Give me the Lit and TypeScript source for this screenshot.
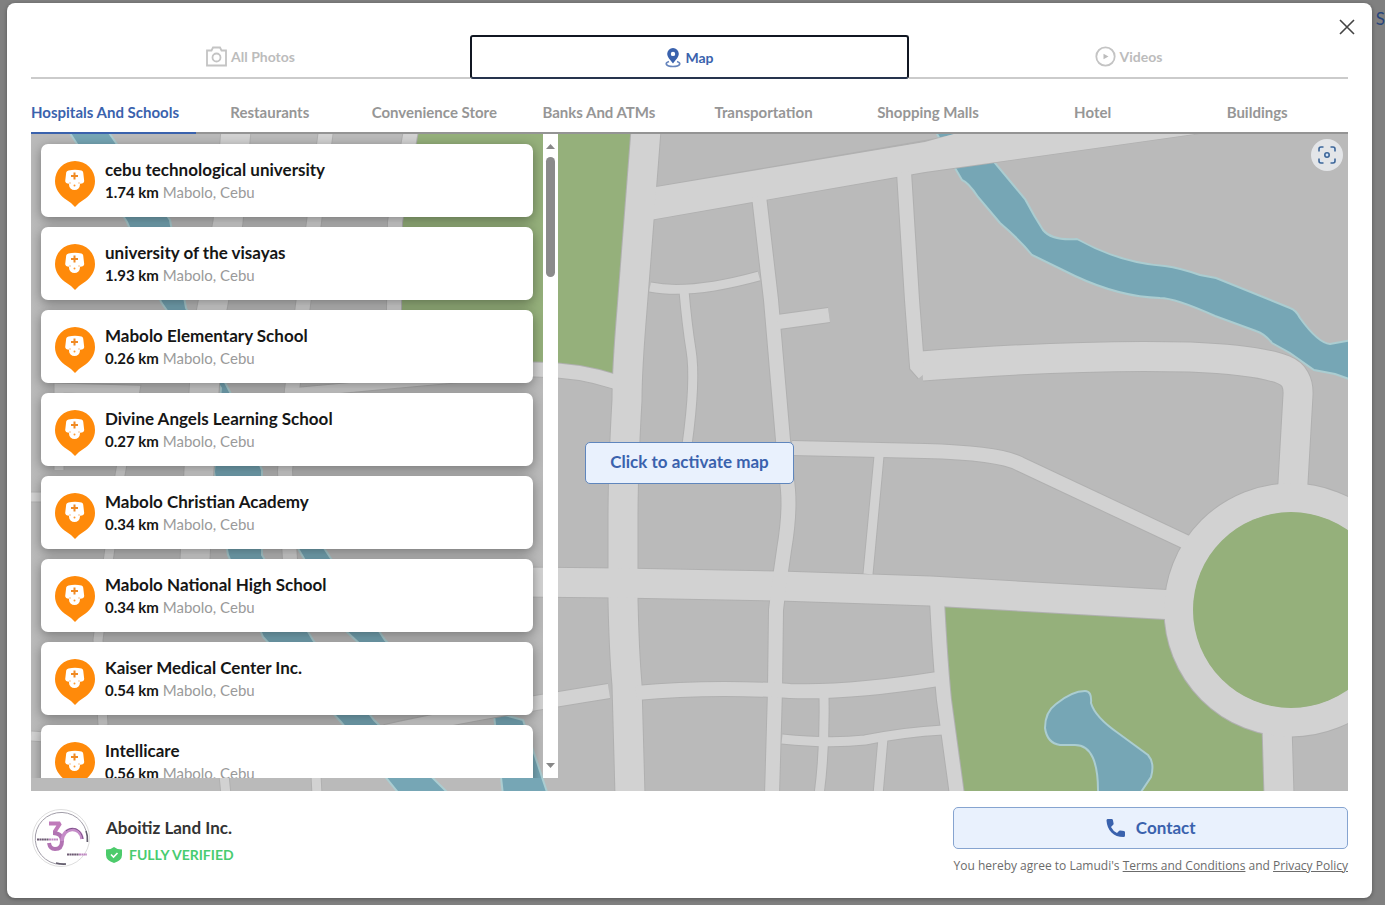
import { LitElement, html, css, svg } from "lit";
import { customElement, property, state } from "lit/decorators.js";
import { classMap } from "lit/directives/class-map.js";

const FONT = css`"Lato", "Open Sans", sans-serif`;

/* Static artwork shown until the live map is activated. */
@customElement("map-artwork")
class MapArtwork extends LitElement {
  static styles = css`
    :host { display: block; width: 100%; height: 100%; }
    svg { display: block; width: 100%; height: 100%; }
    .land { fill: #bababa; }
    .park { fill: #95b07b; }
    .water { fill: #76a6b5; stroke: #abcdd1; stroke-width: 2; }
    .road { fill: #d2d2d2; }
    .lines { fill: none; stroke: #d2d2d2; }
    .edges { fill: none; stroke: #b0b0b0; }
    .w9 { stroke-width: 9; }
    .w14 { stroke-width: 14; }
    .w29 { stroke-width: 29; }
    .edges .w9 { stroke-width: 11; }
    .edges .w14 { stroke-width: 16; }
    .edges .w29 { stroke-width: 31; }
  `;

  private roads() {
    return svg`
      <path class="w29" d="M646 130 L632 310 Q627 370 627 400 Q623 470 623 520 L623 600 Q624 650 627 685 L630 795"/>
      <path class="w29" d="M520 582 L620 583 L780 586 L930 591 L1175 605"/>
      <path class="w29" d="M922 366 Q1080 354 1190 357 Q1260 360 1284 370 Q1299 376 1298 395 L1292 500"/>
      <path class="w29" d="M1277 725 L1279 795"/>
      <path class="w14" d="M904 172 L912 300 L917 366 L924 374"/>
      <path class="w14" d="M759 196 L771 300 L783 440 L788 490 Q790 515 784 550 L779 585 L776 610 L775 690 L772 795"/>
      <path class="w14" d="M792 448 L925 451 Q1000 453 1020 464 L1188 543"/>
      <path class="w14" d="M636 693 Q710 686 790 691 Q850 693 938 679"/>
      <path class="w14" d="M937 600 Q940 660 944 700 L957 795"/>
      <path class="w14" d="M778 322 L829 315"/>
      <path class="w14" d="M516 370 Q570 367 616 382"/>
      <path class="w14" d="M385 732 Q470 713 609 691"/>
      <path class="w9" d="M650 287 Q690 295 759 276"/>
      <path class="w9" d="M684 291 Q687 325 691 350 Q696 380 687 445"/>
      <path class="w9" d="M879 456 L868 574"/>
      <path class="w9" d="M782 739 Q830 744 865 740 Q905 732 943 730"/>
      <path class="w9" d="M824 697 Q825 750 819 795"/>
      <path class="w9" d="M883 738 L878 795"/>
      <path class="w29" d="M236 130 L228 222 L208 330 L199 470 L195 560"/>
      <path class="w14" d="M326 130 L314 222 L303 305 L292 390 L285 471 L290 560"/>
      <path class="w14" d="M411 130 L395 222 L394 310"/>
      <path class="w9" d="M59 470 L59 388 L135 390 L120 475 L109 555 L98 640 L103 725"/>
      <path class="w9" d="M290 393 L532 371"/>
      <path class="w9" d="M31 497 L50 497 M31 736 L60 738"/>
      <path class="w9" d="M224 775 L226 795 M316 775 L317 795"/>
    `;
  }

  render() {
    return html`
      <svg viewBox="31 134 1317 657" preserveAspectRatio="xMidYMid slice" aria-hidden="true">
        <rect class="land" x="31" y="134" width="1317" height="657" />
        <path class="park" d="M418 130 L634 130 L614 374 Q575 363 540 363 L401 363 L402 220 Z" />
        <path class="park" d="M944 606 L1180 618 L1270 725 L1266 795 L960 795 Q948 700 944 606Z" />
        <path class="water" d="M68 130 L107 130 L170 220 L186 308 L230 392 L262 470 L262 555 L313 640 L374 720 L450 795 L400 795 L341 722 L263 637 L228 555 L214 472 L221 388 L161 302 L127 222 Z" />
        <path class="water" d="M296 545 L322 545 L385 640 L450 700 L523 720 L548 795 L503 795 L494 715 L420 700 L347 632 Z" />
        <path class="water" d="M935 130 L970 130 L994 162 L1025 199 Q1034 216 1043 230 Q1052 241 1077 239 Q1120 263 1165 266 Q1180 268 1200 275 L1216 278 L1290 308 Q1296 310 1300 318 Q1318 343 1330 344 L1352 340 L1352 380 L1335 374 L1314 370 L1290 353 L1272 343 Q1265 334 1256 331 L1215 316 Q1175 298 1160 298 Q1120 297 1075 276 L1032 255 Q1020 240 1000 223 L978 197 Q968 182 962 180 L955 168 Z" />
        <path class="water" d="M1085 691 Q1092 691 1091 703 Q1095 717 1118 733 L1148 755 Q1155 763 1151 777 L1139 795 L1098 795 Q1099 745 1075 745 L1060 745 Q1047 743 1045 728 Q1045 712 1056 704 Q1072 691 1085 691 Z" />
        <g class="edges">
          ${this.roads()}
          <path d="M657 187 L925 141 L968 133 M654 219 L925 172 L1200 133" stroke-width="2" />
          <circle cx="1291" cy="610" r="112" stroke-width="31" />
        </g>
        <path class="road" d="M650 188 L925 142 L968 130 L1215 130 L1195 134 L925 172 L650 220 Z" />
        <g class="lines">
          ${this.roads()}
          <circle cx="1291" cy="610" r="112" stroke-width="29" />
        </g>
        <circle class="park" cx="1291" cy="610" r="98" />
      </svg>
    `;
  }
}

@customElement("place-card")
class PlaceCard extends LitElement {
  @property() name = "";
  @property() distance = "";
  @property() area = "";

  static styles = css`
    :host {
      display: flex;
      flex: none;
      align-items: center;
      gap: 10px;
      box-sizing: border-box;
      height: 73px;
      padding: 0 14px;
      border-radius: 7px;
      background: #fff;
      box-shadow: 0 3px 12px rgba(0, 0, 0, 0.36);
      font-family: ${FONT};
    }
    .pin { flex: none; width: 40px; height: 46px; margin-top: 7px; }
    .name { margin: 0; font-size: 17px; line-height: 24px; font-weight: 700; color: #161616; }
    .where { margin: 0; font-size: 15px; line-height: 21px; color: #9a9a9a; }
    .where strong { color: #161616; }
  `;

  render() {
    return html`
      <svg class="pin" viewBox="0 0 40 46" aria-hidden="true">
        <path fill="#ff8a0a" d="M20 0a20 20 0 0 1 20 20c0 8-4.500 13.500-9.500 17.500L24 42l-4 4-4-4-6.500-4.500C4.500 33.500 0 28 0 20A20 20 0 0 1 20 0Z" />
        <path fill="#fff" d="M13.500 9.500Q20 8 26.500 9.500q1.500.5 1.700 2l1 8.500q0 2.500-4 2.800h-11q-4-.3-4-2.800l1-8.500q.3-1.500 2.300-2Z" />
        <circle cx="19.500" cy="23.500" r="5.500" fill="#fff" />
        <path d="M19.500 11.500v7M16 15h7" stroke="#f08a24" stroke-width="2" />
        <path d="M15 21v2M24 21v2" stroke="#f9c08a" stroke-width="1" />
        <circle cx="19.500" cy="24.500" r="1" fill="#ff9a30" />
      </svg>
      <div>
        <h3 class="name">${this.name}</h3>
        <p class="where"><strong>${this.distance}</strong> ${this.area}</p>
      </div>
    `;
  }
}

const CATEGORIES = [
  "Hospitals And Schools", "Restaurants", "Convenience Store", "Banks And ATMs",
  "Transportation", "Shopping Malls", "Hotel", "Buildings",
];

const PLACES = [
  ["cebu technological university", "1.74 km"],
  ["university of the visayas", "1.93 km"],
  ["Mabolo Elementary School", "0.26 km"],
  ["Divine Angels Learning School", "0.27 km"],
  ["Mabolo Christian Academy", "0.34 km"],
  ["Mabolo National High School", "0.34 km"],
  ["Kaiser Medical Center Inc.", "0.54 km"],
  ["Intellicare", "0.56 km"],
];

@customElement("app-root")
class AppRoot extends LitElement {
  @state() private category = 0;

  static styles = css`
    :host {
      display: flex;
      position: relative;
      box-sizing: border-box;
      min-height: 100vh;
      padding: 3px 13px 7px 7px;
      overflow: hidden;
      background: #808080;
      font-family: ${FONT};
    }
    button { font-family: inherit; cursor: pointer; }
    .behind { position: absolute; top: 8px; right: 0; font-size: 17px; line-height: 22px; color: #27457c; }
    .dialog {
      position: relative;
      display: flex;
      flex: 1;
      flex-direction: column;
      min-width: 0;
      padding: 32px 24px 0;
      border-radius: 8px;
      background: #fff;
      box-shadow: 0 1px 4px rgba(0, 0, 0, 0.35);
    }
    .close { position: absolute; top: 14px; right: 15px; width: 20px; height: 20px; padding: 2px; border: 0; background: none; }
    .close svg { display: block; width: 16px; height: 16px; }
    .media { display: grid; grid-template-columns: repeat(3, 1fr); }
    .media button {
      display: flex;
      align-items: center;
      justify-content: center;
      gap: 4px;
      height: 44px;
      padding: 0;
      border: 0;
      border-bottom: 2px solid #cbcbcb;
      background: none;
      color: #bcbcbc;
      font-size: 14px;
      font-weight: 700;
    }
    .media svg { width: 21px; height: 21px; }
    .media .pin { width: 16px; }
    .media .on { border: 2px solid #111722; border-bottom-color: #26344d; border-radius: 3px; color: #3a62ad; }
    .cats { display: grid; grid-template-columns: repeat(8, 1fr); margin-top: 13px; border-bottom: 2px solid #949494; }
    .cats button {
      height: 42px;
      margin-bottom: -2px;
      padding: 0 17px 0 0;
      border: 0;
      border-bottom: 2px solid transparent;
      background: none;
      color: #969696;
      font-size: 15px;
      font-weight: 700;
      white-space: nowrap;
    }
    .cats .on { border-color: #3a62ad; color: #3a62ad; }
    .map { position: relative; display: grid; flex: 1; min-height: 400px; overflow: hidden; place-items: center; }
    .map map-artwork { position: absolute; inset: 0; }
    .panel { position: absolute; inset: 0 auto 13px 0; display: flex; width: 40%; }
    .list { display: flex; flex: 1; flex-direction: column; gap: 10px; min-width: 0; padding: 10px 10px 0; overflow: hidden; }
    .bar { display: flex; flex: none; flex-direction: column; align-items: center; width: 15px; padding: 9px 0; box-sizing: border-box; background: #fff; }
    .bar svg { width: 9px; height: 6px; fill: #888; }
    .thumb { width: 9px; height: 120px; margin: 8px 0 auto; border-radius: 5px; background: #8b8b8b; }
    .soft { border: 1px solid #5f86bd; border-radius: 5px; background: #e9f1fd; color: #3a62ad; font-size: 17px; font-weight: 700; height: 42px; }
    .activate { position: relative; padding: 0 24px 2px; }
    .locate { position: absolute; top: 5px; right: 5px; display: grid; place-items: center; width: 32px; height: 32px; padding: 0; border: 0; border-radius: 50%; background: #e3e5e8; }
    .locate svg { width: 18px; height: 18px; }
    .footer { display: flex; align-items: flex-start; justify-content: space-between; height: 91px; padding-top: 16px; }
    .agent { display: flex; gap: 15px; }
    .logo { width: 60px; height: 60px; }
    .agent h2 { margin: 9px 0 5px; color: #333; font-size: 17px; line-height: 24px; font-weight: 700; }
    .verified { display: flex; align-items: center; gap: 7px; margin: 0; color: #48cc70; font-size: 14px; line-height: 20px; font-weight: 700; }
    .verified svg { width: 16px; height: 16px; }
    .cta { min-width: 390px; }
    .contact { display: flex; align-items: center; justify-content: center; gap: 10px; width: 100%; padding-bottom: 2px; border-color: #86a4d0; }
    .contact svg { width: 20px; height: 20px; }
    .legal { margin: 8px 0 0; color: #6b6b6b; font-family: "Open Sans", sans-serif; font-size: 12px; line-height: 18px; white-space: nowrap; }
    .legal a { color: inherit; }
  `;

  render() {
    return html`
      <span class="behind">S</span>
      <main class="dialog">
        <button class="close" aria-label="Close">
          <svg viewBox="0 0 16 16"><path d="M1 1l14 14M15 1L1 15" stroke="#444" stroke-width="1.600" /></svg>
        </button>
        <nav class="media">
          <button>
            <svg viewBox="0 0 21 21" fill="none" stroke="#c4c4c4" stroke-width="1.800"><path d="M1 4.500h4.500l1.500-3h7l1.500 3H20v15H1Z" /><circle cx="10.500" cy="11.500" r="4" /></svg>
            All Photos
          </button>
          <button class="on">
            <svg class="pin" viewBox="0 0 16 21"><path fill="#3a62ad" fill-rule="evenodd" d="M8 1a5.800 5.800 0 0 1 5.800 5.800C13.800 10.500 10.500 13 8 16.500 5.500 13 2.200 10.500 2.200 6.800A5.800 5.800 0 0 1 8 1Zm0 3.700a2.200 2.200 0 1 0 0 4.400 2.200 2.200 0 0 0 0-4.400Z" /><path fill="none" stroke="#6685bd" stroke-width="1.700" d="M4 14.500C-.5 15.800.5 19.500 8 19.500s8.500-3.700 4-5" /></svg>
            Map
          </button>
          <button>
            <svg viewBox="0 0 21 21"><circle cx="10.500" cy="10.500" r="9.200" fill="none" stroke="#c4c4c4" stroke-width="1.800" /><path d="M8.500 7.800l5 2.700-5 2.700Z" fill="#bcbcbc" /></svg>
            Videos
          </button>
        </nav>
        <nav class="cats">
          ${CATEGORIES.map((c, i) => html`
            <button class=${classMap({ on: i === this.category })} @click=${() => (this.category = i)}>${c}</button>`)}
        </nav>
        <section class="map">
          <map-artwork></map-artwork>
          <div class="panel">
            <div class="list">
              ${PLACES.map(([name, distance]) => html`
                <place-card name=${name} distance=${distance} area="Mabolo, Cebu"></place-card>`)}
            </div>
            <div class="bar">
              <svg viewBox="0 0 9 6"><path d="M0 6L4.500 1 9 6Z" /></svg>
              <div class="thumb"></div>
              <svg viewBox="0 0 9 6"><path d="M0 0L4.500 5 9 0Z" /></svg>
            </div>
          </div>
          <button class="soft activate">Click to activate map</button>
          <button class="locate" aria-label="Center map">
            <svg viewBox="0 0 18 18" fill="#d6e6fa" stroke="#3d6698" stroke-width="1.600"><path d="M1 5.500V3q0-2 2-2h2.500M12.500 1H15q2 0 2 2v2.500M17 12.500V15q0 2-2 2h-2.500M5.500 17H3q-2 0-2-2v-2.500" /><circle cx="9" cy="9" r="2.200" /></svg>
          </button>
        </section>
        <footer class="footer">
          <div class="agent">
            <svg class="logo" viewBox="0 0 60 60" role="img" aria-label="Aboitiz Land">
              <circle cx="30" cy="31" r="28.500" fill="#fff" stroke="#dedede" />
              <path d="M35 57A26 26 0 1 1 56 35" fill="none" stroke="#a19da8" stroke-width="1" />
              <path d="M25 56q5 1.500 10 1M55 24q2 5 1.500 11" fill="none" stroke="#625c6c" stroke-width="1.500" />
              <path d="M18 16.500h11l-5.500 8.500" fill="none" stroke="#c07aba" stroke-width="4" stroke-linejoin="bevel" />
              <path d="M22 26q9 0 9 8t-7 8q-5 0-6-6" fill="none" stroke="#b273b3" stroke-width="4" />
              <path d="M31 34c1-15 19-15 20-2" fill="none" stroke="#c58cc8" stroke-width="3.500" />
              <path d="M35 24c6-5 15-3 17 8" fill="none" stroke="#7b5289" stroke-width="1" />
              <path d="M6 32.500h12M36 47.500h12" stroke="#6d5a73" stroke-width="1.800" stroke-dasharray="2 .4" />
              <path d="M18 32.500h9M48 47.500h8" stroke="#bd86c0" stroke-width="1.800" stroke-dasharray="2 .4" />
            </svg>
            <div>
              <h2>Aboitiz Land Inc.</h2>
              <p class="verified">
                <svg viewBox="0 0 16 16"><path fill="#4ccb6b" d="M0 2.500Q5 2.500 8 0q3 2.500 8 2.500V8q0 5.500-8 8-8-2.500-8-8Z" /><path d="M5 7.500l2.500 2.500L11.500 6" fill="none" stroke="#fff" stroke-width="1.600" /></svg>
                FULLY VERIFIED
              </p>
            </div>
          </div>
          <div class="cta">
            <button class="soft contact">
              <svg viewBox="0 0 20 20"><path fill="#3a62ad" d="M1.500 1h4.200q1 0 1.200 1l.7 3.600q.1.700-.4 1.200L5 9q2 4 6 6l2.200-2.200q.5-.5 1.200-.4l3.600.7q1 .2 1 1.200v3.200q0 1.500-1.500 1.500Q10 19 5.500 14.500 1 10 .5 2.500.5 1 1.500 1Z" /></svg>
              Contact
            </button>
            <p class="legal">You hereby agree to Lamudi's <a href="#terms">Terms and Conditions</a> and <a href="#privacy">Privacy Policy</a></p>
          </div>
        </footer>
      </main>
    `;
  }
}
